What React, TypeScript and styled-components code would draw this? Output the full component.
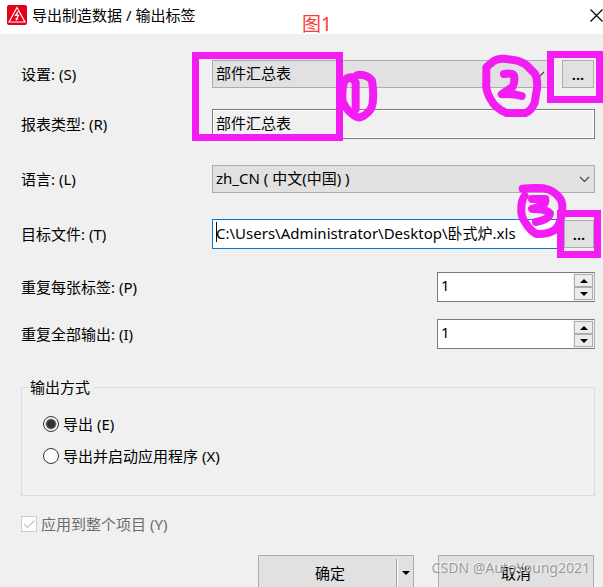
import React from 'react';
import styled, { createGlobalStyle } from 'styled-components';

const GlobalStyle = createGlobalStyle`
  *, *::before, *::after { box-sizing: border-box; }
  body { margin: 0; background: #f0f0f0; overflow: hidden; }
  body, button, input, select {
    font-family: "Noto Sans", "Noto Sans CJK SC", sans-serif;
    font-size: 15px;
    line-height: 20px;
    color: #000;
  }
`;

const Dialog = styled.main`
  position: relative;
  min-height: 100vh;
  background: #f0f0f0;
`;

const TitleBar = styled.header`
  display: flex;
  align-items: center;
  height: 34px;
  padding: 0 0 4px 7px;
  background: #fff;
`;

const Title = styled.h1`
  flex: 1;
  margin: 0 0 0 5px;
  font-size: 15px;
  line-height: 20px;
  font-weight: 400;
`;

const CloseButton = styled.button`
  display: flex;
  padding: 0;
  border: 0;
  background: none;
`;

const Form = styled.form`
  padding: 25px 8px 0 21px;
`;

const Row = styled.div<{ $gap: number }>`
  display: grid;
  grid-template-columns: 191px 1fr;
  align-items: center;
  height: 30px;
  margin-bottom: ${(p) => p.$gap}px;
`;

const Controls = styled.div<{ $end?: boolean }>`
  display: flex;
  align-items: center;
  justify-content: ${(p) => (p.$end ? 'flex-end' : 'flex-start')};
  min-width: 0;
`;

const SelectWrap = styled.div`
  display: grid;
  flex: 1;
  align-items: center;
  > * { grid-area: 1 / 1; }
  > svg { justify-self: end; margin-right: 5px; pointer-events: none; }
`;

const Select = styled.select`
  appearance: none;
  width: 100%;
  height: 28px;
  padding: 0 24px 2px 3px;
  border: 1px solid #adadad;
  border-radius: 0;
  background: #e1e1e1;
`;

const TextBox = styled.input<{ $active?: boolean }>`
  flex: 1;
  min-width: 0;
  height: 30px;
  padding: 0 3px 4px;
  border: 1px solid ${(p) => (p.$active ? '#0078d7' : '#7a7a7a')};
  border-radius: 0;
  background: ${(p) => (p.$active ? '#fff' : '#f0f0f0')};
  box-shadow: inset 0 0 0 1px #fff;
  outline: 0;
`;

const PathBox = styled.div`
  display: grid;
  flex: 1;
  > * { grid-area: 1 / 1; }
`;

const Caret = styled.span`
  width: 1px;
  height: 20px;
  margin: 3px 0 0 4px;
  background: #000;
`;

const BrowseButton = styled.button<{ $width: number; $gap: number }>`
  width: ${(p) => p.$width}px;
  height: 28px;
  margin: 0 1px 0 ${(p) => p.$gap}px;
  padding: 0;
  border: 1px solid #adadad;
  background: #e1e1e1;
  font-weight: 600;
`;

const Spinner = styled.div`
  display: flex;
  width: 158px;
  height: 30px;
  border: 1px solid #7a7a7a;
  border-right-color: #adadad;
  background: #fff;
`;

const SpinnerInput = styled.input`
  flex: 1;
  min-width: 0;
  padding: 0 3px 4px;
  border: 0;
  background: none;
  outline: 0;
`;

const Steps = styled.div`
  display: grid;
  grid-template-rows: 1fr 1fr;
  width: 21px;
  padding: 1px;
  background: #f0f0f0;
`;

const StepButton = styled.button`
  display: flex;
  align-items: center;
  justify-content: center;
  min-height: 0;
  padding: 0;
  border: 1px solid #adadad;
  background: #ececec;
`;

const Group = styled.fieldset`
  display: flex;
  flex-direction: column;
  gap: 12px;
  height: 119px;
  margin: 0 0 18px;
  padding: 17px 21px 0;
  border: 1px solid #dcdcdc;
`;

const Legend = styled.legend`
  margin-left: -15px;
  padding: 0 4px 0 2px;
  line-height: 20px;
`;

const Choice = styled.label<{ $muted?: boolean }>`
  display: flex;
  align-items: center;
  gap: 4px;
  color: ${(p) => (p.$muted ? '#6d6d6d' : '#000')};
`;

const Radio = styled.input`
  appearance: none;
  flex: none;
  width: 16px;
  height: 16px;
  margin: 0;
  border: 1px solid #333;
  border-radius: 50%;
  background: #fff;
  &:checked {
    background: radial-gradient(circle, #333 4px, #fff 6px);
  }
`;

const CheckWrap = styled.span`
  display: grid;
  > * { grid-area: 1 / 1; }
`;

const CheckBox = styled.input`
  appearance: none;
  width: 16px;
  height: 16px;
  margin: 0;
  border: 1px solid #ccc;
  background: #fff;
`;

const Footer = styled.footer`
  display: flex;
  justify-content: flex-end;
  gap: 24px;
  margin-top: 21px;
  padding-right: 1px;
`;

const SplitButton = styled.div`
  display: flex;
  align-items: center;
  width: 156px;
  height: 36px;
  border: 1px solid #adadad;
  background: #e1e1e1;
`;

const SplitMain = styled.button`
  flex: 1;
  height: 28px;
  padding: 0 0 0 5px;
  border: 0;
  border-right: 1px solid #a0a0a0;
  background: none;
`;

const SplitArrow = styled.button`
  display: flex;
  align-items: center;
  justify-content: center;
  width: 16px;
  height: 28px;
  padding: 0;
  border: 0;
  border-left: 1px solid #fff;
  background: none;
`;

const CancelButton = styled.button`
  width: 156px;
  height: 36px;
  padding: 0;
  border: 1px solid #adadad;
  background: #e1e1e1;
`;

const Caption = styled.div`
  position: absolute;
  top: 12px;
  left: 302px;
  color: #fb3a34;
  font-size: 19px;
  line-height: 24px;
`;

const Frame = styled.div<{ $top: number; $left?: number; $right?: number; $width: number; $height: number }>`
  position: absolute;
  top: ${(p) => p.$top}px;
  left: ${(p) => (p.$left === undefined ? 'auto' : p.$left + 'px')};
  right: ${(p) => (p.$right === undefined ? 'auto' : p.$right + 'px')};
  width: ${(p) => p.$width}px;
  height: ${(p) => p.$height}px;
  border: 7px solid #f31cf3;
  pointer-events: none;
`;

const Scribble = styled.svg<{ $top: number; $left?: number; $right?: number }>`
  position: absolute;
  top: ${(p) => p.$top}px;
  left: ${(p) => (p.$left === undefined ? 'auto' : p.$left + 'px')};
  right: ${(p) => (p.$right === undefined ? 'auto' : p.$right + 'px')};
  fill: none;
  stroke: #f31cf3;
  stroke-width: 24;
  stroke-linecap: round;
  stroke-linejoin: round;
  pointer-events: none;
`;

const Watermark = styled.div`
  position: absolute;
  top: 558px;
  right: 13px;
  color: rgba(130, 130, 130, 0.75);
  text-shadow: -1px -1px 0 rgba(255, 255, 255, 0.7);
  font-size: 14px;
  line-height: 20px;
  pointer-events: none;
`;

const Chevron = () => (
  <svg width="11" height="7" viewBox="0 0 11 7" fill="none" stroke="#444" strokeWidth="1.2" aria-hidden="true">
    <path d="M1 1l4.500 4.500L10 1" />
  </svg>
);

const Triangle = ({ up }: { up?: boolean }) => (
  <svg width="8" height="4" viewBox="0 0 8 4" aria-hidden="true">
    <path d={up ? 'M0 4L4 0L8 4Z' : 'M0 0L4 4L8 0Z'} />
  </svg>
);

const AppIcon = () => (
  <svg width="20" height="20" viewBox="0 0 20 20" aria-hidden="true">
    <rect width="20" height="20" rx="2" fill="#e2001a" />
    <path d="M10 2.500L18 17H2Z" fill="none" stroke="#fff" strokeWidth="1.100" />
    <path d="M11.500 6L8.500 10.500L11.500 10L9.500 14.500" fill="none" stroke="#fff" strokeWidth="1.200" />
    <path d="M8.300 13L9 15.800L11.300 14Z" fill="#fff" />
  </svg>
);

function NumberSpinner({ id }: { id: string }) {
  return (
    <Spinner>
      <SpinnerInput id={id} defaultValue="1" inputMode="numeric" />
      <Steps>
        <StepButton type="button" aria-label="增加"><Triangle up /></StepButton>
        <StepButton type="button" aria-label="减少"><Triangle /></StepButton>
      </Steps>
    </Spinner>
  );
}

export default function App() {
  return (
    <>
      <GlobalStyle />
      <Dialog>
        <TitleBar>
          <AppIcon />
          <Title>导出制造数据 / 输出标签</Title>
          <CloseButton type="button" aria-label="关闭">
            <svg width="13" height="13" viewBox="0 0 13 13" stroke="#000" strokeWidth="1.200" aria-hidden="true">
              <path d="M0.500 0.500L12.500 12.500M12.500 0.500L0.500 12.500" />
            </svg>
          </CloseButton>
        </TitleBar>

        <Form onSubmit={(e) => e.preventDefault()}>
          <Row $gap={20}>
            <label htmlFor="scheme">设置: (S)</label>
            <Controls>
              <SelectWrap>
                <Select id="scheme"><option>部件汇总表</option></Select>
                <Chevron />
              </SelectWrap>
              <BrowseButton type="button" $width={32} $gap={12}>...</BrowseButton>
            </Controls>
          </Row>
          <Row $gap={25}>
            <label htmlFor="kind">报表类型: (R)</label>
            <Controls><TextBox id="kind" readOnly value="部件汇总表" /></Controls>
          </Row>
          <Row $gap={25}>
            <label htmlFor="lang">语言: (L)</label>
            <Controls>
              <SelectWrap>
                <Select id="lang"><option>zh_CN ( 中文(中国) )</option></Select>
                <Chevron />
              </SelectWrap>
            </Controls>
          </Row>
          <Row $gap={23}>
            <label htmlFor="target">目标文件: (T)</label>
            <Controls>
              <PathBox>
                <TextBox id="target" $active defaultValue={'C:\\Users\\Administrator\\Desktop\\卧式炉.xls'} />
                <Caret />
              </PathBox>
              <BrowseButton type="button" $width={30} $gap={5}>...</BrowseButton>
            </Controls>
          </Row>
          <Row $gap={17}>
            <label htmlFor="each">重复每张标签: (P)</label>
            <Controls $end><NumberSpinner id="each" /></Controls>
          </Row>
          <Row $gap={28}>
            <label htmlFor="whole">重复全部输出: (I)</label>
            <Controls $end><NumberSpinner id="whole" /></Controls>
          </Row>

          <Group>
            <Legend>输出方式</Legend>
            <Choice><Radio type="radio" name="mode" defaultChecked />导出 (E)</Choice>
            <Choice><Radio type="radio" name="mode" />导出并启动应用程序 (X)</Choice>
          </Group>

          <Choice $muted>
            <CheckWrap>
              <CheckBox type="checkbox" defaultChecked disabled />
              <svg width="16" height="16" viewBox="0 0 16 16" fill="none" stroke="#ccc" strokeWidth="1.500" aria-hidden="true">
                <path d="M3 8L6.500 11.500L13.500 4.500" />
              </svg>
            </CheckWrap>
            应用到整个项目 (Y)
          </Choice>

          <Footer>
            <SplitButton>
              <SplitMain type="submit">确定</SplitMain>
              <SplitArrow type="button" aria-label="更多选项"><Triangle /></SplitArrow>
            </SplitButton>
            <CancelButton type="button">取消</CancelButton>
          </Footer>
        </Form>

        <Caption>图1</Caption>
        <Frame $top={52} $left={192} $width={151} $height={89} />
        <Frame $top={51} $right={0} $width={56} $height={52} />
        <Frame $top={210} $right={2} $width={44} $height={48} />
        <Scribble $top={68} $left={340} width="40" height="56" viewBox="450 84 120 168" aria-hidden="true">
          <path d="M484 112Q466 112 460 132Q455 160 458 185Q470 212 494 228Q506 236 520 228Q544 214 548 190Q552 155 546 122Q534 104 508 104Q495 106 488 118" />
          <path d="M497 128L497 208" />
        </Scribble>
        <Scribble $top={52} $right={60} width="63" height="67" viewBox="60 156 189 201" aria-hidden="true">
          <path d="M79 202L100 184Q112 175 130 176L160 180Q182 182 200 196L224 220Q234 236 231 265L224 308Q214 332 196 339H140Q105 325 92 298Q76 272 79 245Z" />
          <path d="M132 222Q162 216 163 232Q164 250 158 260L125 283Q155 280 185 288" />
        </Scribble>
        <Scribble $top={182} $right={35} width="53" height="58" viewBox="345 96 159 174" aria-hidden="true">
          <path d="M368 116Q400 112 432 115Q462 120 480 145Q490 160 486 185Q482 225 464 240Q440 254 410 252Q392 244 376 218Q362 200 364 175Q364 150 374 138" />
          <path d="M396 147H436Q438 162 425 167L396 177Q440 176 450 190Q448 208 408 216" />
        </Scribble>
        <Watermark>CSDN @AutoYoung2021</Watermark>
      </Dialog>
    </>
  );
}
